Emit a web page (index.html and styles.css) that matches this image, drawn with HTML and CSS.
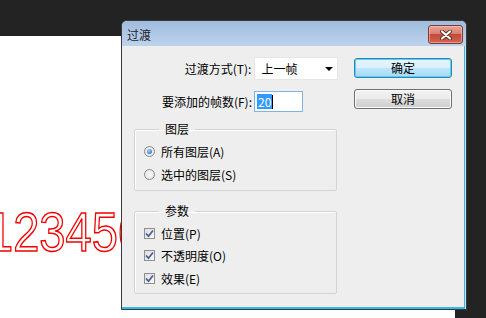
FILE: index.html
```html
<!DOCTYPE html>
<html lang="zh-CN">
<head>
    <meta charset="UTF-8">
    <title>过渡</title>
    <link rel="stylesheet" href="styles.css">
</head>
<body>
    <div class="topbar"></div>
    <div class="workspace">
        <div class="canvas">
            <span class="outline-text">123456</span>
        </div>
    </div>

    <div class="dialog">
        <div class="titlebar">
            <span class="title">过渡</span>
            <button class="close-btn">
                <svg width="14" height="10" viewBox="0 0 14 10">
                    <path d="M3 1.5 L11 8.5 M11 1.5 L3 8.5" stroke="#5a2a24" stroke-width="4" stroke-linecap="round"/>
                    <path d="M3 1.5 L11 8.5 M11 1.5 L3 8.5" stroke="#fff" stroke-width="2.2" stroke-linecap="round"/>
                </svg>
            </button>
        </div>
        <div class="client">
            <div class="left-col">
                <div class="form-row">
                    <label class="field-label">过渡方式(T):</label>
                    <div class="select">
                        <span>上一帧</span>
                        <span class="arrow"></span>
                    </div>
                </div>
                <div class="form-row second">
                    <label class="field-label">要添加的帧数(F):</label>
                    <div class="text-input"><span class="selected">20</span><span class="caret"></span></div>
                </div>

                <fieldset class="group layers">
                    <legend>图层</legend>
                    <div class="option">
                        <span class="radio checked"></span>所有图层(A)
                    </div>
                    <div class="option">
                        <span class="radio"></span>选中的图层(S)
                    </div>
                </fieldset>

                <fieldset class="group params">
                    <legend>参数</legend>
                    <div class="option">
                        <span class="checkbox"><svg width="9" height="9" viewBox="0 0 9 9"><path d="M1 4.5 L3.5 7.2 L8 1.5" fill="none" stroke="#4a5f9c" stroke-width="1.8"/></svg></span>位置(P)
                    </div>
                    <div class="option">
                        <span class="checkbox"><svg width="9" height="9" viewBox="0 0 9 9"><path d="M1 4.5 L3.5 7.2 L8 1.5" fill="none" stroke="#4a5f9c" stroke-width="1.8"/></svg></span>不透明度(O)
                    </div>
                    <div class="option">
                        <span class="checkbox"><svg width="9" height="9" viewBox="0 0 9 9"><path d="M1 4.5 L3.5 7.2 L8 1.5" fill="none" stroke="#4a5f9c" stroke-width="1.8"/></svg></span>效果(E)
                    </div>
                </fieldset>
            </div>
            <div class="right-col">
                <button class="btn default">确定</button>
                <button class="btn">取消</button>
            </div>
        </div>
    </div>
</body>
</html>
```

FILE: styles.css
```css
body {
    margin: 0;
    width: 486px;
    height: 318px;
    overflow: hidden;
    background-color: #232323;
    font-family: "Noto Sans CJK SC", "Liberation Sans", sans-serif;
    font-size: 12px;
    color: #000;
    position: relative;
}
.topbar {
    height: 36px;
}
.workspace {
    width: 455px;
    height: 282px;
    background-color: #fff;
    overflow: hidden;
}
.canvas {
    padding-top: 168px;
    margin-left: -13px;
}
.outline-text {
    display: inline-block;
    font-family: "Liberation Sans", sans-serif;
    font-size: 56px;
    line-height: 56px;
    color: #fff;
    -webkit-text-stroke: 1.5px #f20000;
    transform: scaleX(0.84);
    transform-origin: left;
}

/* dialog window */
.dialog {
    position: absolute;
    left: 121px;
    top: 20px;
    width: 344px;
    height: 288px;
    border: 1px solid #3a3a3a;
    border-radius: 6px 6px 0 0;
    background: #bcd3ec;
    box-shadow: inset 0 0 0 1px #c9dcf0;
    display: flex;
    flex-direction: column;
}
.titlebar {
    height: 25px;
    display: flex;
    align-items: center;
    justify-content: space-between;
    padding: 0 3px 0 5px;
    background: linear-gradient(#9fbbdd, #b2cae7 60%, #bed4ec);
    border-radius: 5px 5px 0 0;
}
.title {
    color: #1e1e1e;
    padding-top: 1px;
}
.close-btn {
    width: 35px;
    height: 19px;
    margin-top: 2px;
    padding: 0;
    border: 1px solid #7a3b33;
    border-radius: 3px;
    background: linear-gradient(#e8a497, #d9806f 45%, #c5493a 50%, #cf6650);
    box-shadow: inset 0 0 0 1px rgba(255, 210, 200, 0.5);
    display: flex;
    align-items: center;
    justify-content: center;
}
.client {
    flex: 1;
    margin: 0 1px 0 0;
    background-color: #eeeeee;
    border-bottom: 2px solid #38b6e4;
    border-right: 1px solid #38b6e4;
    display: flex;
    padding: 11px 0 0 12px;
}
.left-col {
    width: 204px;
}
.form-row {
    display: flex;
    align-items: center;
    height: 23px;
}
.form-row.second {
    margin-top: 11px;
    height: 21px;
}
.field-label {
    width: 118px;
    text-align: right;
    padding-right: 3px;
    white-space: nowrap;
}
.select {
    width: 72px;
    height: 21px;
    background: #fff;
    border: 1px solid #e6e6e6;
    display: flex;
    align-items: center;
    justify-content: space-between;
    padding: 0 4px 0 6px;
}
.arrow {
    width: 0;
    height: 0;
    border-left: 4px solid transparent;
    border-right: 4px solid transparent;
    border-top: 4px solid #000;
}
.text-input {
    width: 45px;
    height: 19px;
    margin-left: -1px;
    background: #fff;
    border: 1px solid #7fb3e6;
    display: flex;
    align-items: center;
    padding-left: 2px;
}
.selected {
    background: #3399ff;
    color: #fff;
    line-height: 15px;
    padding: 0 1px;
}
.caret {
    width: 1px;
    height: 14px;
    background: #000;
}

/* group boxes */
.group {
    margin: 0;
    padding: 4px 0 0 9px;
    width: 203px;
    box-sizing: border-box;
    border: 1px solid #d3d3d3;
    border-radius: 2px;
    box-shadow: 1px 1px 0 #fff inset;
}
.group legend {
    margin-left: 15px;
    padding: 0 6px;
    line-height: 14px;
}
.layers {
    margin-top: 10px;
    height: 69px;
}
.params {
    margin-top: 13px;
    height: 90px;
}
.option {
    display: flex;
    align-items: center;
    height: 23px;
    white-space: nowrap;
}
.params .option {
    height: 22.5px;
}
.radio {
    width: 11px;
    height: 11px;
    border-radius: 50%;
    border: 1px solid #8a8a8a;
    background: radial-gradient(#ffffff, #dcdcdc);
    margin-right: 6px;
    box-sizing: border-box;
    display: flex;
    align-items: center;
    justify-content: center;
}
.radio.checked::after {
    content: "";
    width: 5px;
    height: 5px;
    border-radius: 50%;
    background: radial-gradient(circle at 40% 35%, #9ad0ff, #1b5ea8);
}
.checkbox {
    width: 11px;
    height: 11px;
    border: 1px solid #8f8f8f;
    background: linear-gradient(135deg, #dedede, #fbfbfb);
    margin-right: 6px;
    box-sizing: border-box;
    display: flex;
    align-items: center;
    justify-content: center;
}

/* buttons */
.right-col {
    display: flex;
    flex-direction: column;
    padding-left: 16px;
    padding-top: 1px;
}
.btn {
    width: 98px;
    height: 20px;
    padding: 0;
    font-family: "Noto Sans CJK SC", sans-serif;
    font-size: 12px;
    line-height: 16px;
    color: #000;
    border: 1px solid #707070;
    border-radius: 3px;
    background: linear-gradient(#f2f2f2, #ebebeb 50%, #dddddd 51%, #cfcfcf);
    box-shadow: inset 0 0 0 1px #fbfbfb;
    margin-bottom: 11px;
}
.btn.default {
    border-color: #3c7fb1;
    background: linear-gradient(#e6f5fd, #d9f0fc 50%, #bee6fd 51%, #a7d9f5);
    box-shadow: inset 0 0 0 1px #48d7fb;
}
```
